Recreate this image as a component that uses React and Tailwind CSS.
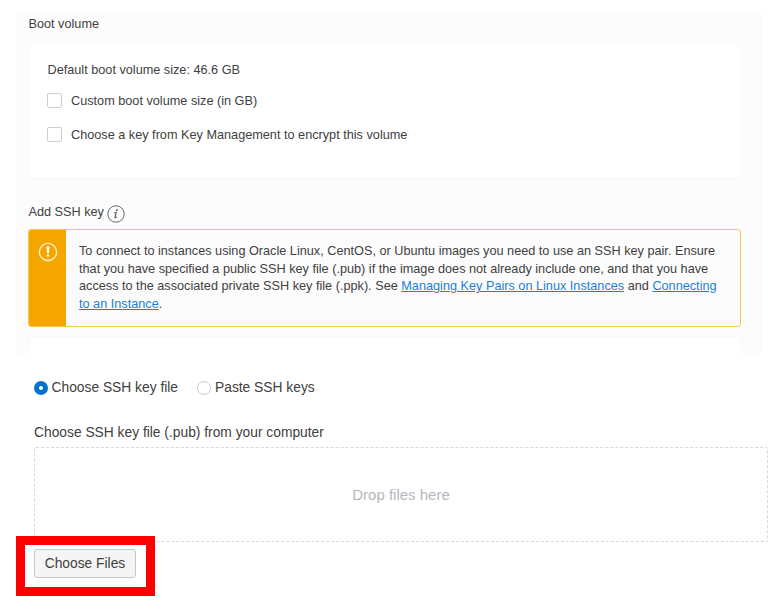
function Checkbox({ label }) {
  return (
    <div className="flex h-[15px] items-center gap-[9px]">
      <span className="h-[15px] w-[15px] shrink-0 rounded-[2px] border border-[#cdcdd6] bg-white" />
      <span className="whitespace-nowrap pt-px leading-[15px]">{label}</span>
    </div>
  );
}

function Link({ children }) {
  return <a className="text-[#1b7fd6] underline underline-offset-[1px]">{children}</a>;
}

function InfoIcon() {
  return (
    <svg className="mt-px h-[18px] w-[18px]" viewBox="0 0 18 18" fill="none">
      <circle cx="9" cy="9" r="8.2" stroke="#6a6a6a" strokeWidth="1" />
      <circle cx="9.8" cy="5.2" r="1" fill="#555" />
      <path d="M7 7.7h2.2L7.9 12.3q-.2 1 2.1-.4" stroke="#555" strokeWidth="1.1" />
    </svg>
  );
}

function WarningIcon() {
  return (
    <svg className="h-[20px] w-[20px]" viewBox="0 0 20 20" fill="none">
      <circle cx="10" cy="10" r="8.6" stroke="#fff3d6" strokeWidth="1.3" />
      <path d="M8.5 4.6h3l-.6 6.6H9.1z" fill="#fff" />
      <circle cx="10" cy="13.6" r="1.2" fill="#fff" />
    </svg>
  );
}

export default function App() {
  return (
    <div className="h-[616px] w-[779px] overflow-hidden bg-white pl-[17px] pt-[11px] font-['Liberation_Sans',Arial,sans-serif] text-[12.7px] text-[#404040]">
      <section className="flex h-[343px] w-[745px] flex-col bg-[#fcfcfc] pl-[11px] pr-[21px]">
        <h2 className="mt-[5px] h-[16px] pl-[0.5px] leading-[16px]">Boot volume</h2>
        <div className="mt-[11px] flex h-[136px] flex-col rounded-[3px] border border-[#f9f9f9] bg-white pl-[18px] pt-[18px]">
          <p className="h-[16px] pl-[0.5px] leading-[16px]">Default boot volume size: 46.6 GB</p>
          <div className="mt-[15px] flex flex-col gap-[19px]">
            <Checkbox label="Custom boot volume size (in GB)" />
            <Checkbox label="Choose a key from Key Management to encrypt this volume" />
          </div>
        </div>
        <div className="mt-[25px] flex h-[20px] gap-[3px]">
          <h2 className="pl-[0.5px] leading-[17px]">Add SSH key</h2>
          <InfoIcon />
        </div>
        <div className="mt-[5px] flex h-[98px] overflow-hidden rounded-[3px] border border-[#f8c650]">
          <div className="flex w-[37px] shrink-0 justify-center bg-[#f5a700] pt-[12px]">
            <WarningIcon />
          </div>
          <p className="whitespace-nowrap pl-[13px] pt-[13px] leading-[17.5px]">
            To connect to instances using Oracle Linux, CentOS, or Ubuntu images you need to use an SSH key pair. Ensure
            <br />
            that you have specified a public SSH key file (.pub) if the image does not already include one, and that you have
            <br />
            access to the associated private SSH key file (.ppk). See <Link>Managing Key Pairs on Linux Instances</Link> and <Link>Connecting</Link>
            <br />
            <Link>to an Instance</Link>.
          </p>
        </div>
        <div className="mt-[10px] grow rounded-t-[3px] border border-b-0 border-[#f9f9f9] bg-white" />
      </section>

      <section className="flex flex-col pl-[17px] text-[13.8px]">
        <div className="mt-[25px] flex h-[18px] items-center">
          <span className="flex h-[14px] w-[14px] items-center justify-center rounded-full bg-[#0572ce]">
            <span className="h-1 w-1 rounded-full bg-white" />
          </span>
          <span className="ml-[3.5px] w-[145.5px] whitespace-nowrap pt-px">Choose SSH key file</span>
          <span className="h-[14px] w-[14px] rounded-full border border-[#cdcdd6]" />
          <span className="ml-[4px] whitespace-nowrap pt-px">Paste SSH keys</span>
        </div>
        <p className="mt-[27px] h-[18px] leading-[18px]">Choose SSH key file (.pub) from your computer</p>
        <div className="mt-[5px] flex h-[95px] w-[734px] items-center justify-center rounded-[2px] border border-dashed border-[#d9d9d9] pt-[2px] text-[15px] text-[#b4b8c0]">
          Drop files here
        </div>
      </section>
      <div className="relative -ml-px -mt-[6px] flex h-[60px] w-[139px] border-[9px] border-[#ff0000] bg-white pl-[9px] pt-[4px]">
        <button className="h-[29px] w-[102px] rounded-[3px] border border-[#c5c9cf] bg-[#f5f5f5] pt-[2px] text-[13.8px]">Choose Files</button>
      </div>
    </div>
  );
}
